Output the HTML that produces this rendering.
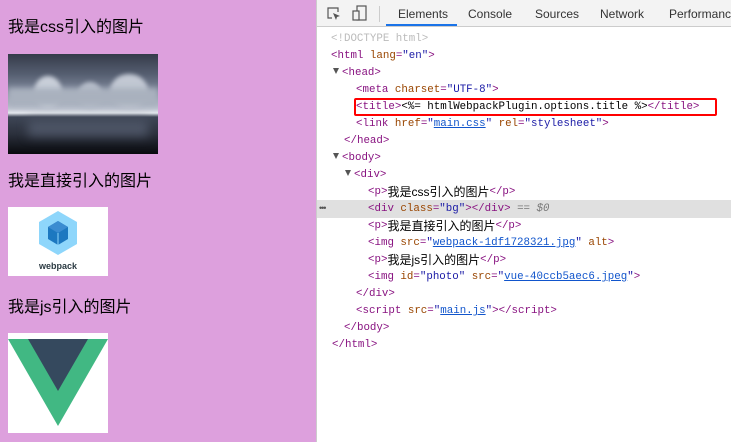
<!DOCTYPE html>
<html><head><meta charset="utf-8"><style>
*{margin:0;padding:0;box-sizing:border-box}
body{width:731px;height:442px;overflow:hidden;position:relative;background:#fff;font-family:"Liberation Sans","Noto Sans CJK SC",sans-serif}
#left{position:absolute;left:0;top:0;width:316px;height:442px;background:#dda0dd}
#left p{position:absolute;left:8px;font-size:16px;color:#000;line-height:18px}
#divider{position:absolute;left:316px;top:0;width:1px;height:442px;background:#ccc}
#bar{position:absolute;left:317px;top:0;width:414px;height:27px;background:#f3f3f3;border-bottom:1px solid #ccc}
.tab{position:absolute;top:7px;font-size:12px;color:#333}
#code{position:absolute;left:317px;top:28px;width:414px;font-family:"Liberation Mono","Noto Sans CJK SC",monospace;font-size:10.8px}
.l{position:absolute;height:17px;line-height:17px;white-space:pre;color:#881280;overflow:hidden}
.an{color:#994500}.av{color:#1a1aa6}.lk{color:#1155cc;text-decoration:underline}
.tx{color:#000;font-family:"Liberation Sans","Noto Sans CJK SC",sans-serif;font-size:12px;display:inline-block;vertical-align:top;line-height:17px;height:17px}
.tri{display:inline-block;width:0;height:0;border-left:3.5px solid transparent;border-right:3.5px solid transparent;border-top:6px solid #555;margin-right:3px;vertical-align:1px}
</style></head><body>
<div id="left">
<p style="top:19px">我是css引入的图片</p>
<div style="position:absolute;left:8px;top:54px;width:150px;height:100px;overflow:hidden;background:linear-gradient(180deg,#353b4a 0%,#555e70 20%,#7a8396 35%,#9aa2b2 45%,#c0c6d2 55%,#e4e8ee 59%,#3e4656 63%,#2b303c 80%,#08090d 100%)">
<div style="position:absolute;left:26px;top:22px;width:28px;height:32px;border-radius:50%;background:#c9cfd9;filter:blur(2px)"></div>
<div style="position:absolute;left:70px;top:28px;width:24px;height:26px;border-radius:50%;background:#b8bfcb;filter:blur(2px)"></div>
<div style="position:absolute;left:102px;top:20px;width:38px;height:34px;border-radius:50%;background:#c2c8d3;filter:blur(2px)"></div>
<div style="position:absolute;left:0;top:34px;width:150px;height:18px;background:#a9b1be;filter:blur(3px)"></div>
<div style="position:absolute;left:20px;top:66px;width:120px;height:16px;background:#4d5566;filter:blur(5px)"></div>
</div>
<p style="top:173px">我是直接引入的图片</p>
<div style="position:absolute;left:8px;top:207px;width:100px;height:69px;background:#fff">
<svg width="100" height="69" viewBox="0 0 100 69"><polygon points="50,4 69,15 69,37 50,48 31,37 31,15" fill="#8ed6fb"/><polygon points="50,14 60,20 60,32 50,38 40,32 40,20" fill="#1c78c0"/><polygon points="50,14 60,20 50,26 40,20" fill="#3b8cd1"/><line x1="50" y1="26" x2="50" y2="38" stroke="#8ed6fb" stroke-width="1"/><text x="50" y="62" text-anchor="middle" font-family="Liberation Sans,sans-serif" font-weight="bold" font-size="9" fill="#2b3a42">webpack</text></svg></div>
<p style="top:299px">我是js引入的图片</p>
<div style="position:absolute;left:8px;top:333px;width:100px;height:100px;background:#fff">
<svg width="100" height="100" viewBox="0 0 100 100"><polygon points="0,6 100,6 50,93" fill="#41b883"/><polygon points="20,6 80,6 50,58" fill="#35495e"/></svg></div>
</div>
<div id="divider"></div>
<div id="bar">
<svg style="position:absolute;left:9px;top:6px" width="16" height="16" viewBox="0 0 16 16"><path d="M6 12H2V2h10v4" fill="none" stroke="#555" stroke-width="1.2"/><path d="M7 7l7 3-3 1-1 3z" fill="#555"/></svg>
<svg style="position:absolute;left:35px;top:5px" width="16" height="17" viewBox="0 0 16 17"><rect x="5" y="1" width="9" height="14" fill="none" stroke="#555" stroke-width="1.2"/><rect x="1" y="6" width="6" height="9" fill="#f3f3f3" stroke="#555" stroke-width="1.2"/></svg>
<div style="position:absolute;left:62px;top:6px;width:1px;height:16px;background:#ccc"></div>
<span class="tab" style="left:81px">Elements</span>
<div style="position:absolute;left:69px;top:24px;width:71px;height:2px;background:#1a73e8"></div>
<span class="tab" style="left:151px">Console</span>
<span class="tab" style="left:218px">Sources</span>
<span class="tab" style="left:283px">Network</span>
<span class="tab" style="left:352px">Performance</span>
</div>
<div style="position:absolute;left:317px;top:200px;width:414px;height:18px;background:#e0e0e0"></div>
<div style="position:absolute;left:319px;top:203px;font-size:9px;color:#555;letter-spacing:-1px">•••</div>
<div id="code">
<div class="l" style="left:14px;top:3px;color:#bbb">&lt;!DOCTYPE html&gt;</div>
<div class="l" style="left:14px;top:20px">&lt;html <span class="an">lang</span>=<span class="av">"en"</span>&gt;</div>
<div class="l" style="left:16px;top:37px"><span class="tri"></span>&lt;head&gt;</div>
<div class="l" style="left:39px;top:54px">&lt;meta <span class="an">charset</span>=<span class="av">"UTF-8"</span>&gt;</div>
<div class="l" style="left:39px;top:71px">&lt;title&gt;<span style="color:#000">&lt;%= htmlWebpackPlugin.options.title %&gt;</span>&lt;/title&gt;</div>
<div style="position:absolute;left:37px;top:70px;width:363px;height:18px;border:2px solid #f00;border-radius:2px"></div>
<div class="l" style="left:39px;top:88px">&lt;link <span class="an">href</span>=<span class="av">"<span class="lk">main.css</span>"</span> <span class="an">rel</span>=<span class="av">"stylesheet"</span>&gt;</div>
<div class="l" style="left:27px;top:105px">&lt;/head&gt;</div>
<div class="l" style="left:16px;top:122px"><span class="tri"></span>&lt;body&gt;</div>
<div class="l" style="left:28px;top:139px"><span class="tri"></span>&lt;div&gt;</div>
<div class="l" style="left:51px;top:156px">&lt;p&gt;<span class="tx">我是css引入的图片</span>&lt;/p&gt;</div>
<div class="l" style="left:51px;top:173px">&lt;div <span class="an">class</span>=<span class="av">"bg"</span>&gt;&lt;/div&gt; <span style="color:#777">== <i>$0</i></span></div>
<div class="l" style="left:51px;top:190px">&lt;p&gt;<span class="tx">我是直接引入的图片</span>&lt;/p&gt;</div>
<div class="l" style="left:51px;top:207px">&lt;img <span class="an">src</span>=<span class="av">"<span class="lk">webpack-1df1728321.jpg</span>"</span> <span class="an">alt</span>&gt;</div>
<div class="l" style="left:51px;top:224px">&lt;p&gt;<span class="tx">我是js引入的图片</span>&lt;/p&gt;</div>
<div class="l" style="left:51px;top:241px">&lt;img <span class="an">id</span>=<span class="av">"photo"</span> <span class="an">src</span>=<span class="av">"<span class="lk">vue-40ccb5aec6.jpeg</span>"</span>&gt;</div>
<div class="l" style="left:39px;top:258px">&lt;/div&gt;</div>
<div class="l" style="left:39px;top:275px">&lt;script <span class="an">src</span>=<span class="av">"<span class="lk">main.js</span>"</span>&gt;&lt;/script&gt;</div>
<div class="l" style="left:27px;top:292px">&lt;/body&gt;</div>
<div class="l" style="left:15px;top:309px">&lt;/html&gt;</div>
</div>
</body></html>
